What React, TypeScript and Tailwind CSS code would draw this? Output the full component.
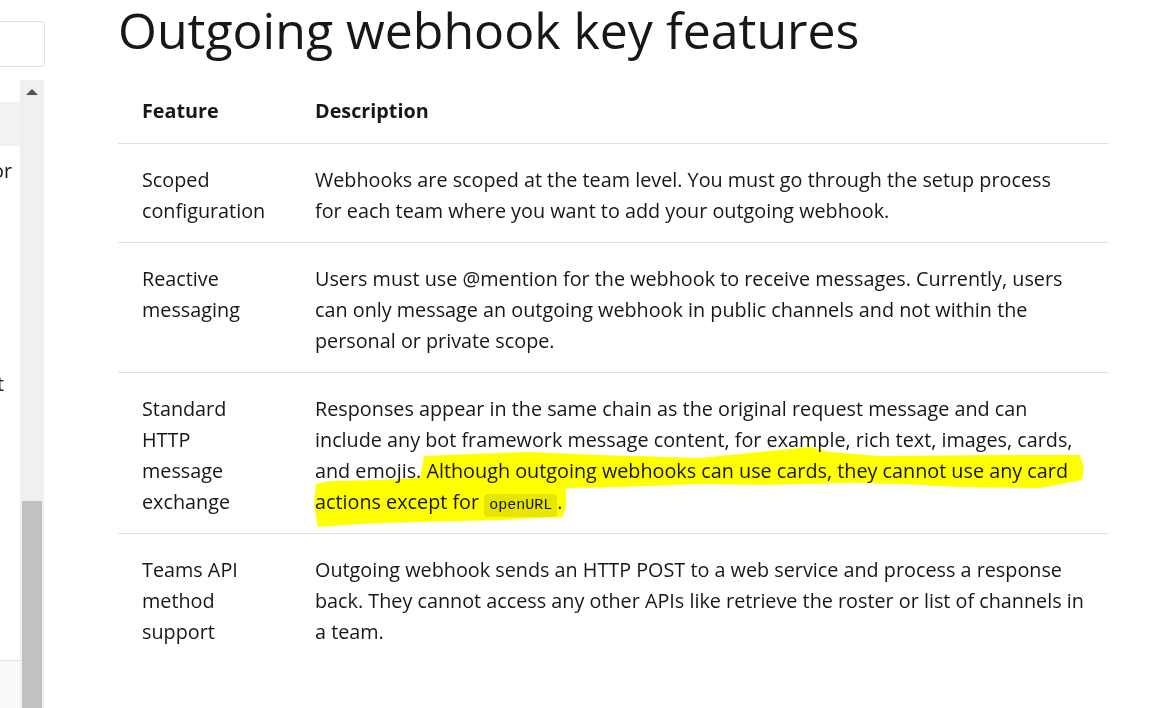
import React from "react"

type Row = {
  feature: string[]
  lines: React.ReactNode[]
}

const rows: Row[] = [
  {
    feature: ["Scoped", "configuration"],
    lines: [
      "Webhooks are scoped at the team level. You must go through the setup process",
      "for each team where you want to add your outgoing webhook.",
    ],
  },
  {
    feature: ["Reactive", "messaging"],
    lines: [
      "Users must use @mention for the webhook to receive messages. Currently, users",
      "can only message an outgoing webhook in public channels and not within the",
      "personal or private scope.",
    ],
  },
  {
    feature: ["Standard", "HTTP", "message", "exchange"],
    lines: [
      "Responses appear in the same chain as the original request message and can",
      "include any bot framework message content, for example, rich text, images, cards,",
      "and emojis. Although outgoing webhooks can use cards, they cannot use any card",
      <>
        actions except for{" "}
        <code className="rounded-[4px] bg-[#e6e6e6] px-[5px] py-[3px] font-['Liberation_Mono',monospace] text-[15px] leading-[16px]">
          openURL
        </code>
        .
      </>,
    ],
  },
  {
    feature: ["Teams API", "method", "support"],
    lines: [
      "Outgoing webhook sends an HTTP POST to a web service and process a response",
      "back. They cannot access any other APIs like retrieve the roster or list of channels in",
      "a team.",
    ],
  },
]

// freehand marker stroke, page coordinates
const highlight =
  "M316,484 L330,481 L380,480 L420,478 L424,456 L470,454 L530,452 L600,455 L700,458 L760,452 L810,447 L830,452 L880,456 L1000,455 L1080,455 L1084,468 L1082,480 L1040,488 L960,487 L900,484 L850,483 L760,485 L700,484 L620,487 L566,488 L566,505 L563,517 L500,520 L420,522 L360,524 L318,527 L314,505 Z"

function Sidebar() {
  return (
    <div className="flex w-[45px] shrink-0 flex-col">
      <div className="mt-[21px] -ml-[10px] h-[46px] w-[55px] rounded-[4px] border border-[#e1e1e1] bg-white" />
      <div className="mt-[13px] flex flex-1">
        <div className="flex w-[20px] flex-col overflow-hidden">
          <div className="h-[22px]" />
          <div className="h-[44px] bg-[#f2f2f2]" />
          <div className="flex h-[50px] items-center justify-end overflow-hidden whitespace-nowrap pr-[8px] text-[19.8px] text-[#171717]">
            Connector
          </div>
          <div className="h-[163px]" />
          <div className="flex h-[50px] items-center justify-end overflow-hidden whitespace-nowrap pr-[16px] text-[19.8px] text-[#171717]">
            Connect
          </div>
          <div className="h-[252px] border-b border-[#e1e1e1]" />
          <div className="flex-1 bg-[#fafafa]" />
        </div>
        <div className="flex w-[24px] flex-col bg-[#f0f0f0]">
          <div className="flex h-[24px] items-center justify-center">
            <div className="h-0 w-0 border-x-[6px] border-b-[6px] border-x-transparent border-b-[#505050]" />
          </div>
          <div className="h-[397px]" />
          <div className="mx-[2px] flex-1 bg-[#c1c1c1]" />
        </div>
      </div>
    </div>
  )
}

export default function App() {
  return (
    <div className="relative flex h-[708px] w-full overflow-hidden bg-white font-['Open_Sans',sans-serif] text-[#171717]">
      <Sidebar />
      <main className="ml-[73px] mr-[60px] flex-1">
        <h1 className="h-[75px] text-[50px] leading-[60px] font-normal">
          Outgoing webhook key features
        </h1>
        <table className="w-full border-collapse text-[19.8px] leading-[31px]">
          <thead>
            <tr className="border-b border-[#e1e1e1]">
              <th className="w-[173px] pt-[20px] pb-[17px] pl-[24px] text-left font-bold">Feature</th>
              <th className="pt-[20px] pb-[17px] pl-[24px] text-left font-bold">Description</th>
            </tr>
          </thead>
          <tbody>
            {rows.map((row, i) => (
              <tr key={i} className={i < rows.length - 1 ? "border-b border-[#e1e1e1]" : ""}>
                <td className="pt-[20px] pb-[16px] pl-[24px] align-top">
                  {row.feature.map((f) => (
                    <span key={f} className="block">
                      {f}
                    </span>
                  ))}
                </td>
                <td className="pt-[20px] pb-[16px] pl-[24px] align-top">
                  {row.lines.map((l, j) => (
                    <span key={j} className="block whitespace-nowrap">
                      {l}
                    </span>
                  ))}
                </td>
              </tr>
            ))}
          </tbody>
        </table>
      </main>
      <svg
        className="pointer-events-none absolute top-0 left-0 mix-blend-multiply"
        width="1169"
        height="708"
        viewBox="0 0 1169 708"
      >
        <path d={highlight} fill="#ffff00" />
      </svg>
    </div>
  )
}
